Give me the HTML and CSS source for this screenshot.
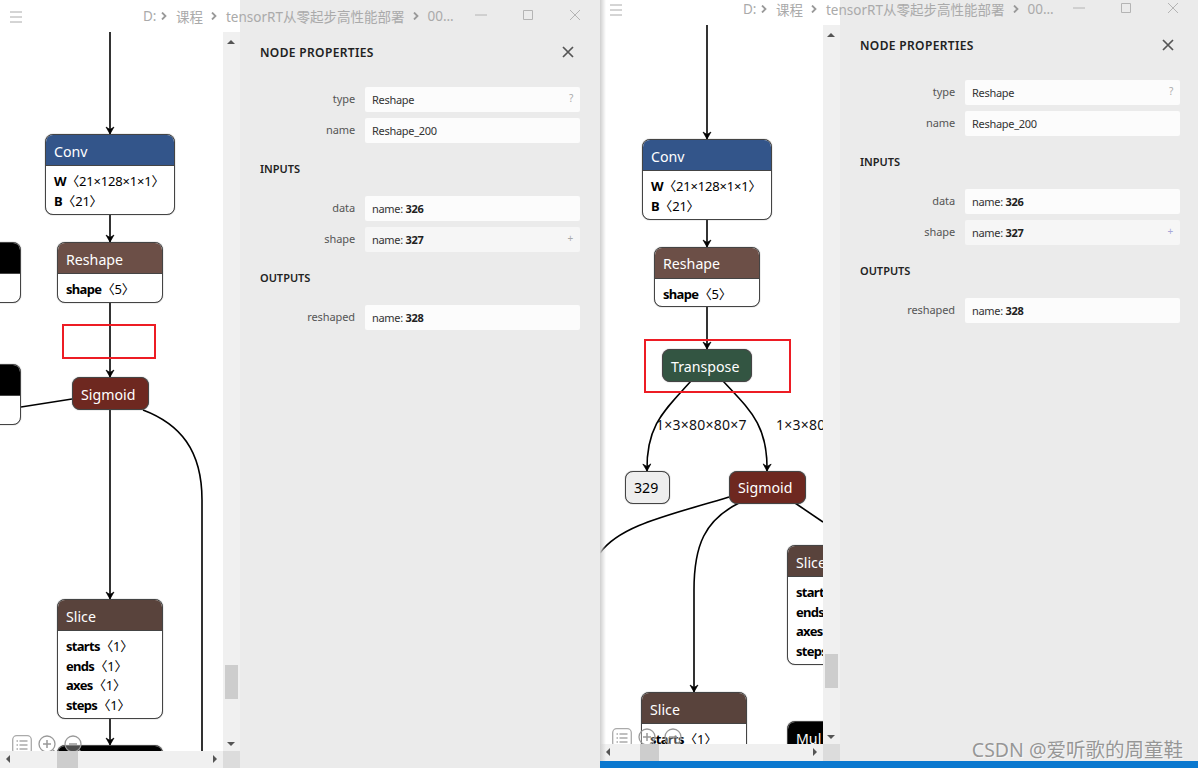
FILE: index.html
```html
<!DOCTYPE html>
<html lang="en">
<head>
    <meta charset="UTF-8">
    <meta name="viewport" content="width=device-width, initial-scale=1.0">
    <title>Netron compare</title>
    <link rel="stylesheet" href="styles.css">
</head>
<body>
    <svg class="defs" width="0" height="0">
        <defs>
            <marker id="arrow" markerWidth="10" markerHeight="10" refX="9" refY="5" orient="auto" markerUnits="userSpaceOnUse">
                <path d="M2,1 L9,5 L2,9 L4.5,5 Z" fill="#000" stroke="#000" stroke-width="0.7"/>
            </marker>
            <symbol id="i-list" viewBox="0 0 20 20">
                <rect x="0.7" y="0.7" width="18.6" height="18.6" rx="4" fill="#fff" fill-opacity="0.85" stroke="#aaa" stroke-width="1.3"/>
                <path d="M4.5 6h1.5M7.5 6h8M4.5 10h1.5M7.5 10h8M4.5 14h1.5M7.5 14h8" stroke="#aaa" stroke-width="1.5"/>
            </symbol>
            <symbol id="i-in" viewBox="0 0 20 20">
                <circle cx="9" cy="9" r="8" fill="#fff" fill-opacity="0.3" stroke="#999" stroke-width="1.3"/>
                <path d="M5 9h8M9 5v8M15 15l3.5 3.5" stroke="#999" stroke-width="1.5"/>
            </symbol>
            <symbol id="i-out" viewBox="0 0 20 20">
                <circle cx="9" cy="9" r="8" fill="#fff" fill-opacity="0.3" stroke="#999" stroke-width="1.3"/>
                <path d="M5 9h8M15 15l3.5 3.5" stroke="#999" stroke-width="1.5"/>
            </symbol>
        </defs>
    </svg>

    <div class="screen">
        <div class="win win-left">
            <div class="main-col">
                <div class="title-space"></div>
                <div class="canvas">
                    <svg class="edges" viewBox="0 32 223 719" width="223" height="719">
                        <path class="edge" d="M110 32V134" marker-end="url(#arrow)"/>
                        <path class="edge" d="M110 214V242" marker-end="url(#arrow)"/>
                        <path class="edge" d="M110 302V377" marker-end="url(#arrow)"/>
                        <path class="edge" d="M110 410V599" marker-end="url(#arrow)"/>
                        <path class="edge" d="M110 718V745" marker-end="url(#arrow)"/>
                        <path class="edge" d="M21 407L72 399"/>
                        <path class="edge" d="M143 410C180 424 202 450 202 500V751"/>
                    </svg>
                    <div class="node op n1"><div class="op-head c-layer">Conv</div><div class="op-body"><div><b>W</b> <span class="t">〈21×128×1×1〉</span></div><div><b>B</b> <span class="t">〈21〉</span></div></div></div>
                    <div class="node op n2"><div class="op-head c-shape">Reshape</div><div class="op-body"><div><b>shape</b> <span class="t">〈5〉</span></div></div></div>
                    <div class="mark n3"></div>
                    <div class="node pill c-act n4">Sigmoid</div>
                    <div class="node op n5"><div class="op-head c-tensor">Slice</div><div class="op-body"><div><b>starts</b> <span class="t">〈1〉</span></div><div><b>ends</b> <span class="t">〈1〉</span></div><div><b>axes</b> <span class="t">〈1〉</span></div><div><b>steps</b> <span class="t">〈1〉</span></div></div></div>
                    <div class="node op n6"><div class="op-head c-black">Mul</div></div>
                    <div class="node op n7"><div class="op-head c-black"></div><div class="op-body"></div></div>
                    <div class="node op n8"><div class="op-head c-black"></div><div class="op-body"></div></div>
                </div>
                <div class="tools">
                    <svg class="tool"><use href="#i-list"/></svg>
                    <svg class="tool"><use href="#i-in"/></svg>
                    <svg class="tool"><use href="#i-out"/></svg>
                </div>
            </div>
            <div class="vbar">
                <div class="title-gap"></div>
                <div class="vtrack"><span class="arr-up"></span><span class="vthumb"></span><span class="arr-down"></span></div>
            </div>
            <div class="hbar-wrap">
                <div class="hbar"><span class="arr-left"></span><span class="hthumb"></span><span class="arr-right"></span></div>
                <div class="corner"></div>
            </div>
            <aside class="panel">
                <div class="panel-head"><span>NODE PROPERTIES</span><svg class="panel-x" viewBox="0 0 12 12"><path d="M1 1L11 11M11 1L1 11"/></svg></div>
                <div class="rows">
                    <label>type</label><div class="val">Reshape<span class="val-mark">?</span></div>
                    <label>name</label><div class="val">Reshape_200</div>
                </div>
                <h2>INPUTS</h2>
                <div class="rows">
                    <label>data</label><div class="val">name: <b>326</b></div>
                    <label>shape</label><div class="val val-dim">name: <b>327</b><span class="val-mark">+</span></div>
                </div>
                <h2>OUTPUTS</h2>
                <div class="rows">
                    <label>reshaped</label><div class="val">name: <b>328</b></div>
                </div>
            </aside>
            <div class="titlebar">
                <svg class="burger" viewBox="0 0 12 12"><path d="M0 1H12M0 6H12M0 11H12"/></svg>
                <div class="crumbs"><span>D:</span><svg class="chev" viewBox="0 0 6 8"><path d="M1 0.5L4.5 4L1 7.5"/></svg><span>课程</span><svg class="chev" viewBox="0 0 6 8"><path d="M1 0.5L4.5 4L1 7.5"/></svg><span>tensorRT从零起步高性能部署</span><svg class="chev" viewBox="0 0 6 8"><path d="M1 0.5L4.5 4L1 7.5"/></svg><span>00...</span></div>
                <div class="winbtns">
                    <svg viewBox="0 0 12 12"><path d="M0 6H12"/></svg>
                    <svg viewBox="0 0 12 12"><path d="M1.5 1.5H10.5V10.5H1.5Z"/></svg>
                    <svg viewBox="0 0 12 12"><path d="M1 1L11 11M11 1L1 11"/></svg>
                </div>
            </div>
        </div>

        <div class="right-col">
            <div class="win win-right">
                <div class="main-col">
                    <div class="title-space"></div>
                    <div class="canvas">
                        <svg class="edges" viewBox="600 25 223 719" width="223" height="719">
                            <path class="edge" d="M707 25V139" marker-end="url(#arrow)"/>
                            <path class="edge" d="M707 219V247" marker-end="url(#arrow)"/>
                            <path class="edge" d="M707 306V349" marker-end="url(#arrow)"/>
                            <path class="edge" d="M691 381C665 410 646 425 647 471" marker-end="url(#arrow)"/>
                            <path class="edge" d="M723 381C750 410 768 425 767 471" marker-end="url(#arrow)"/>
                            <path class="edge" d="M729 497C670 515 620 525 600 553"/>
                            <path class="edge" d="M739 503C705 520 694 545 694 590V692" marker-end="url(#arrow)"/>
                            <path class="edge" d="M795 503L823 522"/>
                        </svg>
                        <div class="node op m1"><div class="op-head c-layer">Conv</div><div class="op-body"><div><b>W</b> <span class="t">〈21×128×1×1〉</span></div><div><b>B</b> <span class="t">〈21〉</span></div></div></div>
                        <div class="node op m2"><div class="op-head c-shape">Reshape</div><div class="op-body"><div><b>shape</b> <span class="t">〈5〉</span></div></div></div>
                        <div class="node pill c-trans m3">Transpose</div>
                        <div class="mark m4"></div>
                        <div class="edge-label m5">1×3×80×80×7</div>
                        <div class="edge-label m6">1×3×80×80×7</div>
                        <div class="node pill c-out m7">329</div>
                        <div class="node pill c-act m8">Sigmoid</div>
                        <div class="node op m9"><div class="op-head c-tensor">Slice</div><div class="op-body"><div><b>starts</b> <span class="t">〈1〉</span></div><div><b>ends</b> <span class="t">〈1〉</span></div><div><b>axes</b> <span class="t">〈1〉</span></div><div><b>steps</b> <span class="t">〈1〉</span></div></div></div>
                        <div class="node op m10"><div class="op-head c-tensor">Slice</div><div class="op-body"><div><b>starts</b> <span class="t">〈1〉</span></div><div><b>ends</b> <span class="t">〈1〉</span></div></div></div>
                        <div class="node op m11"><div class="op-head c-black">Mul</div></div>
                    </div>
                    <div class="tools">
                        <svg class="tool"><use href="#i-list"/></svg>
                        <svg class="tool"><use href="#i-in"/></svg>
                        <svg class="tool"><use href="#i-out"/></svg>
                    </div>
                </div>
                <div class="vbar">
                    <div class="title-gap"></div>
                    <div class="vtrack"><span class="arr-up"></span><span class="vthumb"></span><span class="arr-down"></span></div>
                </div>
                <div class="hbar-wrap">
                    <div class="hbar"><span class="arr-left"></span><span class="hthumb"></span><span class="arr-right"></span></div>
                    <div class="corner"></div>
                </div>
                <aside class="panel">
                    <div class="panel-head"><span>NODE PROPERTIES</span><svg class="panel-x" viewBox="0 0 12 12"><path d="M1 1L11 11M11 1L1 11"/></svg></div>
                    <div class="rows">
                        <label>type</label><div class="val">Reshape<span class="val-mark">?</span></div>
                        <label>name</label><div class="val">Reshape_200</div>
                    </div>
                    <h2>INPUTS</h2>
                    <div class="rows">
                        <label>data</label><div class="val">name: <b>326</b></div>
                        <label>shape</label><div class="val val-dim">name: <b>327</b><span class="val-mark val-plus">+</span></div>
                    </div>
                    <h2>OUTPUTS</h2>
                    <div class="rows">
                        <label>reshaped</label><div class="val">name: <b>328</b></div>
                    </div>
                </aside>
                <div class="titlebar">
                    <svg class="burger" viewBox="0 0 12 12"><path d="M0 1H12M0 6H12M0 11H12"/></svg>
                    <div class="crumbs"><span>D:</span><svg class="chev" viewBox="0 0 6 8"><path d="M1 0.5L4.5 4L1 7.5"/></svg><span>课程</span><svg class="chev" viewBox="0 0 6 8"><path d="M1 0.5L4.5 4L1 7.5"/></svg><span>tensorRT从零起步高性能部署</span><svg class="chev" viewBox="0 0 6 8"><path d="M1 0.5L4.5 4L1 7.5"/></svg><span>00...</span></div>
                    <div class="winbtns">
                        <svg viewBox="0 0 12 12"><path d="M0 6H12"/></svg>
                        <svg viewBox="0 0 12 12"><path d="M1.5 1.5H10.5V10.5H1.5Z"/></svg>
                        <svg viewBox="0 0 12 12"><path d="M1 1L11 11M11 1L1 11"/></svg>
                    </div>
                </div>
                <div class="win-shadow"></div>
            </div>
            <div class="taskbar"></div>
        </div>
        <div class="watermark">CSDN @爱听歌的周童鞋</div>
    </div>
</body>
</html>
```

FILE: styles.css
```css
body {
    margin: 0;
    font-family: "Noto Sans", "Noto Sans CJK SC", sans-serif;
    background-color: #fff;
    overflow: hidden;
}

.defs {
    position: absolute;
}

.screen {
    position: relative;
    display: flex;
    width: 1198px;
    height: 768px;
    overflow: hidden;
}

.win {
    position: relative;
    display: grid;
    grid-template-columns: 223px 17px 1fr;
    grid-template-rows: 1fr 17px;
    background-color: #fff;
}
.win-left {
    width: 600px;
    height: 768px;
    --title: 32px;
}
.win-right {
    width: 598px;
    height: 761px;
    --title: 25px;
}
.right-col {
    display: flex;
    flex-direction: column;
}
.taskbar {
    height: 7px;
    background-color: #0a78cf;
}
.win-shadow {
    position: absolute;
    top: 0;
    bottom: 0;
    left: 0;
    width: 6px;
    background: linear-gradient(to right, #cfcfcf, rgba(255, 255, 255, 0));
}

/* graph column */
.main-col {
    position: relative;
    display: flex;
    flex-direction: column;
    min-height: 0;
}
.title-space,
.title-gap {
    height: var(--title);
    flex: none;
}
.canvas {
    position: relative;
    flex: 1;
    overflow: hidden;
}
.edges {
    position: absolute;
    top: 0;
    left: 0;
}
.edge {
    fill: none;
    stroke: #000;
    stroke-width: 1.6;
}

.node {
    position: absolute;
    box-sizing: border-box;
    font-size: 14.2px;
    color: #000;
}
.op {
    width: 106px;
    border: 1px solid #444;
    border-radius: 8px;
    background-color: #fff;
    box-shadow: 0 0 1px #555;
    overflow: hidden;
}
.op-head {
    box-sizing: border-box;
    height: 31px;
    padding-left: 8px;
    line-height: 34px;
    color: #fff;
    border-bottom: 1px solid #444;
}
.op-body {
    padding: 6px 8px;
    font-size: 13px;
    line-height: 19.6px;
    white-space: nowrap;
}
.op-body b {
    font-weight: 700;
    letter-spacing: -0.7px;
}
.t {
    margin-left: -3px;
    letter-spacing: -0.2px;
}
.pill {
    display: flex;
    align-items: center;
    padding: 2px 0 0 8px;
    border: 1px solid #444;
    border-radius: 8px;
    box-shadow: 0 0 1px #555;
    color: #fff;
}
.c-layer { background-color: #33558a; }
.c-shape { background-color: #6c4f47; }
.c-tensor { background-color: #59433c; }
.c-act { background-color: #6e2820; }
.c-trans { background-color: #335542; }
.c-black { background-color: #000; }
.c-out { background-color: #eee; color: #000; }

.mark {
    position: absolute;
    box-sizing: border-box;
    border: 2px solid #ed1c24;
}
.edge-label {
    position: absolute;
    font-size: 14px;
    letter-spacing: 0.25px;
    line-height: 18px;
    color: #111;
    white-space: nowrap;
}

/* left graph */
.n1 { left: 45px; top: 102px; width: 130px; height: 81px; }
.n2 { left: 57px; top: 210px; height: 61px; }
.n3 { left: 62px; top: 292px; width: 94px; height: 35px; }
.n4 { left: 72px; top: 345px; width: 77px; height: 33px; }
.n5 { left: 57px; top: 567px; height: 120px; }
.n6 { left: 57px; top: 713px; height: 60px; }
.n7 { left: -46px; top: 210px; width: 67px; height: 61px; }
.n8 { left: -46px; top: 332px; width: 67px; height: 61px; }

/* right graph */
.m1 { left: 42px; top: 114px; width: 130px; height: 81px; }
.m2 { left: 54px; top: 222px; height: 60px; }
.m2 .op-head { line-height: 32px; }
.m3 { left: 62px; top: 324px; width: 90px; height: 33px; }
.m4 { left: 44px; top: 314px; width: 147px; height: 54px; }
.m5 { left: 56px; top: 391px; }
.m6 { left: 176px; top: 391px; }
.m7 { left: 25px; top: 446px; width: 45px; height: 33px; padding-top: 0; }
.m8 { left: 129px; top: 446px; width: 77px; height: 33px; padding-top: 0; }
.m9 { left: 187px; top: 520px; height: 120px; }
.m10 { left: 41px; top: 667px; height: 90px; }
.m11 { left: 187px; top: 696px; height: 60px; }

.tools {
    position: absolute;
    left: 12px;
    bottom: -4px;
    display: flex;
    gap: 6px;
}
.tool {
    width: 20px;
    height: 20px;
}

/* scrollbars */
.vbar {
    display: flex;
    flex-direction: column;
    background-color: #fff;
}
.vtrack {
    position: relative;
    flex: 1;
    background-color: #f0f0f0;
}
.vthumb {
    position: absolute;
    left: 2px;
    bottom: 52px;
    width: 13px;
    height: 34px;
    background-color: #cdcdcd;
}
.win-right .vthumb {
    bottom: 56px;
}
.arr-up,
.arr-down,
.arr-left,
.arr-right {
    position: absolute;
    width: 0;
    height: 0;
    border: 4px solid transparent;
}
.arr-up {
    top: 4px;
    left: 4px;
    border-bottom-color: #555;
}
.arr-down {
    bottom: 1px;
    left: 4px;
    border-top-color: #555;
}
.arr-left {
    left: 2px;
    top: 4px;
    border-right-color: #555;
}
.arr-right {
    right: 2px;
    top: 4px;
    border-left-color: #555;
}
.hbar-wrap {
    grid-column: 1 / 3;
    display: flex;
}
.hbar {
    position: relative;
    flex: 1;
    background-color: #f0f0f0;
}
.hthumb {
    position: absolute;
    left: 57px;
    top: 0;
    width: 21px;
    height: 17px;
    background-color: #cdcdcd;
}
.win-right .hthumb {
    left: 40px;
    width: 19px;
}
.corner {
    width: 17px;
    background-color: #dcdcdc;
}

/* sidebar */
.panel {
    grid-column: 3;
    grid-row: 1 / 3;
    box-sizing: border-box;
    padding: 42px 20px 0;
    background-color: #ebebeb;
    color: #333;
}
.win-right .panel {
    padding-top: 35px;
}
.panel-head {
    display: flex;
    justify-content: space-between;
    align-items: center;
    height: 20px;
    padding-right: 6px;
    font-size: 12px;
    font-weight: 600;
    letter-spacing: 0.35px;
    color: #222;
}
.panel-x {
    width: 12px;
    height: 12px;
    fill: none;
    stroke: #555;
    stroke-width: 1.7;
}
.rows {
    display: grid;
    grid-template-columns: 95px 215px;
    column-gap: 10px;
    row-gap: 6px;
    margin-top: 25px;
}
.rows label {
    text-align: right;
    font-size: 11px;
    letter-spacing: -0.1px;
    line-height: 24px;
    color: #555;
}
.val {
    position: relative;
    box-sizing: border-box;
    height: 25px;
    padding-left: 7px;
    border-radius: 2px;
    background-color: #fcfcfc;
    font-size: 11px;
    letter-spacing: -0.3px;
    line-height: 26px;
    color: #333;
}
.val b {
    font-weight: 700;
    color: #222;
}
.val-dim {
    background-color: #f6f6f6;
}
.val-mark {
    position: absolute;
    right: 7px;
    top: -2px;
    font-size: 10px;
    color: #aaa;
}
.val-plus {
    color: #a8a8d8;
}
h2 {
    height: 20px;
    margin: 16px 0 0;
    font-size: 11px;
    font-weight: 600;
    line-height: 20px;
    color: #222;
}
h2 + .rows {
    margin-top: 17px;
}

/* window title overlay */
.titlebar {
    position: absolute;
    top: 0;
    left: 0;
    right: 0;
    display: flex;
    align-items: center;
    height: 32px;
    padding-left: 10px;
    color: #aaa;
    font-size: 13.5px;
}
.win-right .titlebar {
    height: 18px;
}
.burger {
    width: 12px;
    height: 12px;
    margin-top: 2px;
    fill: none;
    stroke: #aaa;
    stroke-width: 1;
}
.crumbs {
    display: flex;
    align-items: center;
    gap: 8.5px;
    margin-left: 121px;
    white-space: nowrap;
}
.crumbs span:first-child {
    margin-right: -3.5px;
}
.chev {
    width: 6px;
    height: 8px;
    fill: none;
    stroke: #999;
    stroke-width: 1.8;
}
.winbtns {
    display: flex;
    gap: 35px;
    margin-top: -2px;
    margin-left: auto;
    padding-right: 19px;
}
.winbtns svg {
    width: 12px;
    height: 12px;
    fill: none;
    stroke: #b4b4b4;
    stroke-width: 1;
}

.watermark {
    position: absolute;
    right: 15px;
    bottom: 6px;
    font-size: 19.5px;
    line-height: 24px;
    color: rgba(120, 120, 120, 0.75);
    text-shadow: 1px 1px 1px rgba(255, 255, 255, 0.6);
    white-space: nowrap;
}
```
